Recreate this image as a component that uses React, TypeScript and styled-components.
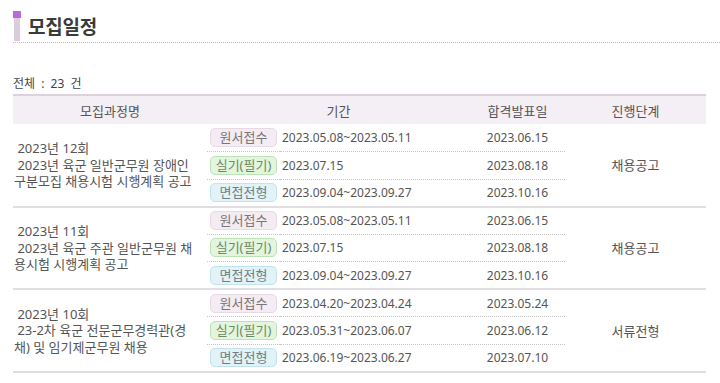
import React from 'react';
import styled, { createGlobalStyle } from 'styled-components';

type Step = { kind: 'apply' | 'exam' | 'interview'; period: string; result: string };
type Course = { lines: string[]; stage: string; steps: Step[] };

const stepLabel = {
  apply: '원서접수',
  exam: '실기(필기)',
  interview: '면접전형',
};

const courses: Course[] = [
  {
    lines: ['\u00a02023년 12회', '\u00a02023년 육군 일반군무원 장애인', '구분모집 채용시험 시행계획 공고'],
    stage: '채용공고',
    steps: [
      { kind: 'apply', period: '2023.05.08~2023.05.11', result: '2023.06.15' },
      { kind: 'exam', period: '2023.07.15', result: '2023.08.18' },
      { kind: 'interview', period: '2023.09.04~2023.09.27', result: '2023.10.16' },
    ],
  },
  {
    lines: ['\u00a02023년 11회', '\u00a02023년 육군 주관 일반군무원 채', '용시험 시행계획 공고'],
    stage: '채용공고',
    steps: [
      { kind: 'apply', period: '2023.05.08~2023.05.11', result: '2023.06.15' },
      { kind: 'exam', period: '2023.07.15', result: '2023.08.18' },
      { kind: 'interview', period: '2023.09.04~2023.09.27', result: '2023.10.16' },
    ],
  },
  {
    lines: ['\u00a02023년 10회', '\u00a023-2차 육군 전문군무경력관(경', '채) 및 임기제군무원 채용'],
    stage: '서류전형',
    steps: [
      { kind: 'apply', period: '2023.04.20~2023.04.24', result: '2023.05.24' },
      { kind: 'exam', period: '2023.05.31~2023.06.07', result: '2023.06.12' },
      { kind: 'interview', period: '2023.06.19~2023.06.27', result: '2023.07.10' },
    ],
  },
];

const App: React.FC = () => {
  return (
    <Page>
      <GlobalStyle />
      <TitleRow>
        <Marker>
          <MarkerTop />
          <MarkerBar />
        </Marker>
        <Title>모집일정</Title>
      </TitleRow>
      <Count>전체 : 23 건</Count>
      <Table>
        <colgroup>
          <col style={{ width: 194 }} />
          <col style={{ width: 73 }} />
          <col style={{ width: 190 }} />
          <col style={{ width: 95 }} />
          <col style={{ width: 141 }} />
        </colgroup>
        <thead>
          <tr>
            <HeadCell>모집과정명</HeadCell>
            <HeadCell colSpan={2}>기간</HeadCell>
            <HeadCell>합격발표일</HeadCell>
            <HeadCell>진행단계</HeadCell>
          </tr>
        </thead>
        {courses.map((course, ci) => (
          <Group key={ci}>
            {course.steps.map((step, si) => {
              const last = si === course.steps.length - 1;
              return (
                <StepRow key={si}>
                  {si === 0 && (
                    <NameCell rowSpan={3}>
                      {course.lines.map((line, li) => (
                        <NameLine key={li}>{line}</NameLine>
                      ))}
                    </NameCell>
                  )}
                  <BadgeCell $last={last}>
                    <Badge $kind={step.kind}>{stepLabel[step.kind]}</Badge>
                  </BadgeCell>
                  <DateCell $last={last}>{step.period}</DateCell>
                  <ResultCell $last={last}>{step.result}</ResultCell>
                  {si === 0 && <StageCell rowSpan={3}>{course.stage}</StageCell>}
                </StepRow>
              );
            })}
          </Group>
        ))}
      </Table>
    </Page>
  );
};

export default App;

const GlobalStyle = createGlobalStyle`
  body {
    margin: 0;
    background: #fff;
    color: #555;
    font-family: "Noto Sans", "Noto Sans CJK KR", sans-serif;
  }
`;

const Page = styled.div`
  padding: 10px 0 0 13px;
`;

const TitleRow = styled.div`
  display: flex;
  align-items: flex-end;
  gap: 7px;
  height: 31px;
  border-bottom: 1px dotted #bbb;
  padding-bottom: 1px;
`;

const Marker = styled.div`
  display: flex;
  flex-direction: column;
  align-items: center;
  width: 8px;
  height: 30px;
`;

const MarkerTop = styled.div`
  width: 8px;
  height: 7px;
  background: #b96ad8;
`;

const MarkerBar = styled.div`
  width: 6px;
  flex: 1;
  background: #dacbdd;
`;

const Title = styled.h2`
  margin: 0 0 3px;
  font-size: 19px;
  font-weight: 700;
  line-height: 22px;
  color: #3a3a3a;
  letter-spacing: -0.2px;
`;

const Count = styled.div`
  margin-top: 33px;
  font-size: 12px;
  line-height: 16px;
  color: #444;
  word-spacing: 3px;
`;

const Table = styled.table`
  width: 693px;
  margin-top: 2px;
  border-collapse: collapse;
  table-layout: fixed;
  font-size: 12px;
  color: #555;
`;

const HeadCell = styled.th`
  height: 28px;
  padding: 0;
  border-top: 2px solid #ddd1dd;
  background: #f4eef5;
  font-size: 13px;
  font-weight: 400;
  text-align: center;
  color: #555;
`;

const Group = styled.tbody`
  border-bottom: 2px solid #e2dde2;
`;

const StepRow = styled.tr`
  height: 27.5px;
`;

const NameCell = styled.td`
  padding: 0 0 0 1px;
  vertical-align: middle;
  font-size: 13px;
  line-height: 16.5px;
  color: #555;
`;

const NameLine = styled.div`
  white-space: nowrap;
`;

const dotted = (last?: boolean) => (last ? '' : 'border-bottom: 1px dotted #c4c4c4;');

const BadgeCell = styled.td<{ $last?: boolean }>`
  padding: 0 0 0 3px;
  ${({ $last }) => dotted($last)}
`;

const badgeColors = {
  apply: { bg: '#f5ebf3', border: '#e8dae5', text: '#777' },
  exam: { bg: '#e3f5de', border: '#bce3b3', text: '#6b8a66' },
  interview: { bg: '#e1f3f8', border: '#c2e3ec', text: '#6f7f85' },
};

const Badge = styled.span<{ $kind: Step['kind'] }>`
  display: inline-block;
  box-sizing: border-box;
  width: 67px;
  height: 19px;
  line-height: 17px;
  border-radius: 5px;
  border: 1px solid ${({ $kind }) => badgeColors[$kind].border};
  background: ${({ $kind }) => badgeColors[$kind].bg};
  color: ${({ $kind }) => badgeColors[$kind].text};
  font-size: 13px;
  text-align: center;
  vertical-align: middle;
`;

const DateCell = styled.td<{ $last?: boolean }>`
  padding: 0 0 0 2px;
  white-space: nowrap;
  ${({ $last }) => dotted($last)}
`;

const ResultCell = styled.td<{ $last?: boolean }>`
  padding: 0;
  text-align: center;
  ${({ $last }) => dotted($last)}
`;

const StageCell = styled.td`
  padding: 0;
  text-align: center;
  font-size: 13px;
  color: #555;
`;
